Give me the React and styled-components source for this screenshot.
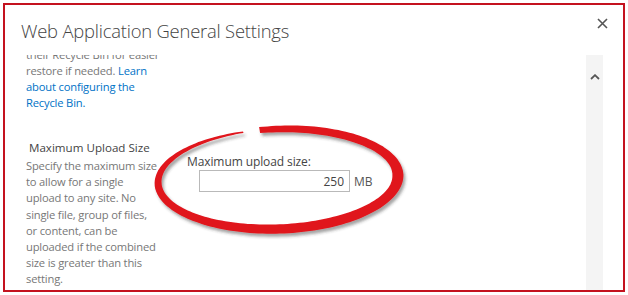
import React from "react";
import styled, { createGlobalStyle } from "styled-components";

const GlobalStyle = createGlobalStyle`
  html, body {
    margin: 0;
    padding: 0;
    background: #ffffff;
  }
  body {
    font-family: "Open Sans", "Noto Sans", "Liberation Sans", sans-serif;
  }
`;

const Page = styled.div`
  position: relative;
  width: 628px;
  height: 295px;
  padding: 3px;
  box-sizing: border-box;
  overflow: hidden;
`;

const Frame = styled.div`
  height: 100%;
  box-sizing: border-box;
  border: 2px solid #c4121f;
  display: flex;
  flex-direction: column;
  background: #ffffff;
`;

const Header = styled.div`
  height: 50px;
  flex: none;
  display: flex;
  justify-content: space-between;
  align-items: flex-start;
  padding: 13px 15px 0 16px;
  box-sizing: border-box;
`;

const Title = styled.h1`
  margin: 1px 0 0;
  font-size: 18.4px;
  line-height: 24px;
  font-weight: 300;
  color: #444444;
  letter-spacing: -0.2px;
`;

const CloseButton = styled.button`
  border: 0;
  background: none;
  padding: 0;
  width: 11px;
  height: 11px;
  display: flex;
  cursor: pointer;
`;

const Body = styled.div`
  flex: 1;
  display: flex;
  min-height: 0;
`;

const Viewport = styled.div`
  flex: 1;
  overflow: hidden;
  padding-left: 21px;
`;

const Scrolled = styled.div`
  margin-top: ${(p) => p.$offset}px;
`;

const Desc = styled.p`
  margin: 0;
  font-size: 11.2px;
  letter-spacing: -0.18px;
  line-height: ${(p) => p.$lh || 16}px;
  color: #777777;
`;

const Link = styled.a`
  color: #0072c6;
  text-decoration: none;
`;

const Section = styled.div`
  display: grid;
  grid-template-columns: 161px 1fr;
  margin-top: 28px;
`;

const SectionHeading = styled.h3`
  margin: 0 0 1px;
  padding-left: 3px;
  font-size: 11.6px;
  line-height: 18px;
  font-weight: 400;
  color: #444444;
`;

const Field = styled.div`
  padding-top: 15px;
`;

const FieldLabel = styled.label`
  display: block;
  font-size: 12px;
  letter-spacing: -0.1px;
  line-height: 16px;
  color: #444444;
`;

const InputRow = styled.div`
  display: flex;
  align-items: center;
  gap: 4px;
  margin-left: 12px;
`;

const NumberInput = styled.input`
  width: 151px;
  height: 22px;
  box-sizing: border-box;
  border: 1px solid #b9b9b9;
  padding: 0 5px 0 0;
  text-align: right;
  font-family: inherit;
  font-size: 12px;
  color: #444444;
  outline: none;
`;

const Unit = styled.span`
  font-size: 12px;
  color: #555555;
`;

const ScrollTrack = styled.div`
  width: 17px;
  flex: none;
  margin-right: 20px;
  background: #f4f4f4;
  display: flex;
  justify-content: center;
  padding-top: 19px;
  box-sizing: border-box;
`;

const Annotation = styled.svg`
  position: absolute;
  left: 0;
  top: 0;
  pointer-events: none;
`;

function crescentPath() {
  const cx = 278, cy = 179, rx = 120, ry = 50;
  const rot = (-2 * Math.PI) / 180;
  const stops = [
    [-98, 6], [-60, 8], [0, 11], [60, 10], [100, 9],
    [150, 8], [180, 7], [210, 5], [235, 3], [255, 1.5],
  ];
  const width = (a) => {
    for (let i = 0; i < stops.length - 1; i++) {
      const [a0, w0] = stops[i];
      const [a1, w1] = stops[i + 1];
      if (a >= a0 && a <= a1) return w0 + ((a - a0) / (a1 - a0)) * (w1 - w0);
    }
    return 1.5;
  };
  const pt = (a, d) => {
    const t = (a * Math.PI) / 180;
    const x = (rx + d) * Math.cos(t);
    const y = (ry + d) * Math.sin(t);
    return [
      cx + x * Math.cos(rot) - y * Math.sin(rot),
      cy + x * Math.sin(rot) + y * Math.cos(rot),
    ];
  };
  const outer = [];
  const inner = [];
  for (let a = -98; a <= 255; a += 2) {
    const w = width(a) / 2;
    outer.push(pt(a, w));
    inner.push(pt(a, -w));
  }
  const pts = outer.concat(inner.reverse());
  return "M" + pts.map(([x, y]) => `${x.toFixed(1)} ${y.toFixed(1)}`).join(" L") + " Z";
}

export default function App() {
  return (
    <>
      <GlobalStyle />
      <Page>
        <Frame>
          <Header>
            <Title>Web Application General Settings</Title>
            <CloseButton aria-label="Close">
              <svg width="11" height="11" viewBox="0 0 11 11">
                <path d="M1 1 L10 10 M10 1 L1 10" stroke="#555" strokeWidth="1.6" />
              </svg>
            </CloseButton>
          </Header>
          <Body>
            <Viewport>
              <Scrolled $offset={-8}>
                <Desc>
                  their Recycle Bin for easier
                  <br />
                  restore if needed. <Link href="#">Learn</Link>
                  <br />
                  <Link href="#">about configuring the</Link>
                  <br />
                  <Link href="#">Recycle Bin.</Link>
                </Desc>
                <Section>
                  <div>
                    <SectionHeading>Maximum Upload Size</SectionHeading>
                    <Desc $lh={16.2}>
                      Specify the maximum size
                      <br />
                      to allow for a single
                      <br />
                      upload to any site. No
                      <br />
                      single file, group of files,
                      <br />
                      or content, can be
                      <br />
                      uploaded if the combined
                      <br />
                      size is greater than this
                      <br />
                      setting.
                    </Desc>
                  </div>
                  <Field>
                    <FieldLabel htmlFor="maxUpload">Maximum upload size:</FieldLabel>
                    <InputRow>
                      <NumberInput id="maxUpload" defaultValue="250" />
                      <Unit>MB</Unit>
                    </InputRow>
                  </Field>
                </Section>
              </Scrolled>
            </Viewport>
            <ScrollTrack>
              <svg width="10" height="6" viewBox="0 0 10 6">
                <path d="M1 5 L5 1.2 L9 5" fill="none" stroke="#555" strokeWidth="1.8" />
              </svg>
            </ScrollTrack>
          </Body>
        </Frame>
        <Annotation width="628" height="295" viewBox="0 0 628 295">
          <defs>
            <filter id="inkShadow" x="-10%" y="-20%" width="120%" height="140%">
              <feDropShadow dx="2" dy="3" stdDeviation="1.6" floodColor="#333" floodOpacity="0.45" />
            </filter>
          </defs>
          <path d={crescentPath()} fill="#e0131b" filter="url(#inkShadow)" />
        </Annotation>
      </Page>
    </>
  );
}
